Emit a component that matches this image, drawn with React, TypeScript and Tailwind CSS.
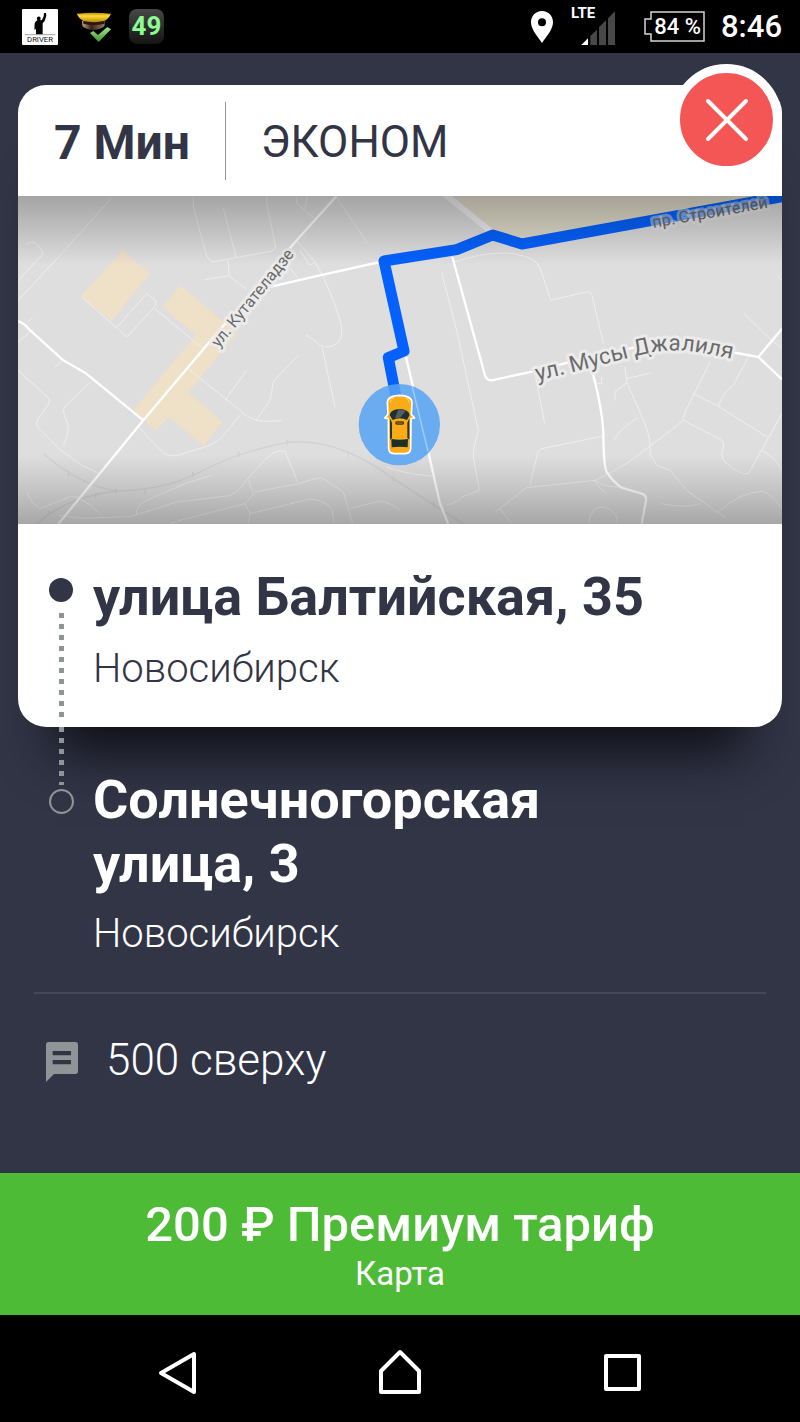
import { X } from "lucide-react";

const minorRoads = [
  "M54 330 L185 190 L335 22",
  "M54 272 L125 195 Q132 185 125 178 L105 157 Q95 150 78 165",
  "M54 540 L145 622 Q153 630 145 642 L112 690 Q106 702 115 712 L180 778 L245 825 L295 848",
  "M275 572 L195 648 Q188 656 192 672 L203 700 Q210 725 190 765",
  "M54 455 L98 418 M165 530 L190 508 M80 398 L97 382",
  "M245 320 L350 412 L380 440 L465 348 Q472 338 465 330 L440 310 L350 412",
  "M465 355 L605 472",
  "M570 540 L720 660 Q755 695 800 693 L845 691",
  "M740 540 L675 630",
  "M892 497 L825 568 Q816 578 817 592 L810 630 L768 690",
  "M720 675 L665 742 Q655 752 620 768 L530 796 Q500 800 480 778 L418 712",
  "M580 20 V50 L618 190 Q625 215 645 214 L815 182 Q828 178 826 165 L800 40 V20",
  "M670 55 L708 200",
  "M615 268 L688 256 L740 298 M688 256 L684 210",
  "M890 20 V40 L945 85 M915 55 L922 20",
  "M1010 22 L1102 158",
  "M890 150 L945 215 Q990 290 1022 395 Q1035 455 1000 466 Q970 478 945 452 L918 434",
  "M900 180 L925 220 Q935 228 945 212 M870 232 L895 265",
  "M966 470 L1005 650",
  "M80 905 Q95 940 120 955 L215 917 Q255 925 305 975",
  "M175 975 L250 984 L395 978 L530 935 L690 916 Q720 900 730 880 L800 803 Q830 775 855 783 Q862 800 893 875",
  "M410 975 Q405 945 440 930 L560 878 L635 855",
  "M510 998 L735 940 L765 905 L895 880 Q940 865 965 862 L1030 905 L1058 1000",
  "M748 870 Q748 890 760 905 M735 940 L750 970 L745 1000",
  "M750 970 L930 926 Q970 928 995 955 L1003 1000",
  "M1050 955 L1140 932 Q1180 940 1200 960",
  "M1325 247 L1370 420 L1435 720 Q1420 770 1420 800 L1438 900 L1385 920 Q1360 945 1340 942",
  "M1365 215 Q1440 188 1510 188 Q1580 190 1612 218 Q1625 240 1652 330 L1762 304 Q1772 302 1776 315 L1810 460",
  "M1605 550 L1634 700",
  "M1805 738 L1625 775 Q1612 780 1610 800 L1590 885",
  "M1485 965 L1580 892 L1785 870 Q1860 835 1900 805 L2045 695 L2060 655 L2130 515",
  "M1500 955 L1535 1000",
  "M1875 530 L1880 575 L1935 700 Q1955 755 1950 790 L1970 825 L2010 840 L2060 900 L2180 985",
  "M1880 565 L1955 547 M1880 577 L1845 605 V630 M1790 580 H1805 V560",
  "M1840 750 Q1870 705 1915 682",
  "M2048 688 L2165 750 Q2175 758 2170 770 Q2160 800 2175 815 Q2220 855 2245 850 L2346 670",
  "M2080 610 L2155 648 L2305 742 M2155 648 Q2170 605 2200 585 L2245 500",
  "M2285 780 Q2320 795 2346 838",
  "M2150 970 Q2215 905 2290 903 Q2320 915 2346 955",
  "M2232 370 L2310 445 L2346 475 M2332 255 L2346 270",
  "M1765 1000 Q1775 945 1810 950 Q1860 965 1850 1000",
  "M1785 870 Q1795 895 1820 908 M1785 870 Q1810 890 1860 890",
  "M1985 940 Q2060 955 2100 940",
  "M1160 830 Q1210 850 1295 857",
];

const mainRoads = [
  "M54 392 Q75 400 85 415 L190 510 L255 547 L430 690",
  "M800 292 L960 255 L1140 215",
  "M175 1001 L430 690 L620 465 L890 150 L1010 17",
  "M1357 200 L1455 555 Q1460 570 1475 570 L1600 543 L1750 505 L2000 450 L2210 488 L2275 500 L2346 415",
  "M2275 500 L2346 567",
  "M1770 520 Q1805 640 1810 725 Q1811 830 1820 845 Q1840 875 1865 892 L1925 910 Q1940 915 1938 930 L1925 1001",
  "M1218 500 L1285 785 L1320 940 L1345 1001",
];

function StatusBar() {
  return (
    <header className="flex h-[53px] items-center justify-between bg-black pr-[18px] pl-[22px] text-white">
      <div className="flex items-center gap-[18px]">
        <svg className="size-[36px]" viewBox="0 0 108 108">
          <rect width="108" height="108" rx="3" fill="#fff" />
          <path d="M66 12 L72 12 L73 20 L68 36 L62 43 L62 76 H42 V60 L37 62 L38 43 Q41 36 46 34 Q43 28 46 24 Q52 20 56 26 L55 34 L60 33 L65 22Z" fill="#050505" />
          <path d="M8 77 H100" stroke="#777" strokeWidth="2" />
          <text x="54" y="100" textAnchor="middle" fontSize="23" fill="#111" fontFamily="Roboto, sans-serif">DRIVER</text>
        </svg>
        <svg className="h-[32px] w-[35px]" viewBox="0 0 105 96">
          <defs>
            <linearGradient id="cap" x1="0" x2="0" y1="0" y2="1">
              <stop offset="0" stopColor="#b98a05" />
              <stop offset=".35" stopColor="#ffdc36" />
              <stop offset="1" stopColor="#b98909" />
            </linearGradient>
            <linearGradient id="visor" x1="0" x2="1">
              <stop offset="0" stopColor="#c6a58b" />
              <stop offset=".4" stopColor="#3a2415" />
              <stop offset="1" stopColor="#9c8070" />
            </linearGradient>
            <linearGradient id="tick" x1="0" x2="0" y1="0" y2="1">
              <stop offset="0" stopColor="#a6e887" />
              <stop offset="1" stopColor="#3f9135" />
            </linearGradient>
          </defs>
          <path d="M18 30 H88 L85 46 Q70 58 50 56 Q28 55 19 44Z" fill="url(#visor)" />
          <path d="M22 30 H86 V38 Q54 46 22 38Z" fill="#2a1809" />
          <path d="M2 8 Q54 2 105 8 Q98 24 84 30 Q54 37 22 30 Q8 22 2 8Z" fill="url(#cap)" />
          <path d="M42 66 L52 60 L66 72 L94 48 L105 55 L68 93Z" fill="url(#tick)" />
        </svg>
        <span className="flex size-[35px] items-center justify-center rounded-lg bg-linear-to-b from-[#484848] to-[#151515] text-[26px] leading-[35px] font-bold text-[#8dfa92]">
          49
        </span>
      </div>
      <div className="flex items-center">
        <svg className="h-[32px] w-[22px]" viewBox="0 0 66 96">
          <path fillRule="evenodd" fill="#fff" d="M33 0 C13 0 0 15 0 34 C0 57 24 82 33 96 C42 82 66 57 66 34 C66 15 53 0 33 0Z M33 22 a12 12 0 1 1 0 24 a12 12 0 1 1 0-24Z" />
        </svg>
        <div className="relative ml-[18px] h-[40px] w-[44px]">
          <span className="absolute -top-0.5 left-0 text-[15px] leading-4 font-bold">LTE</span>
          <svg className="absolute right-0 bottom-0.5 h-[34px] w-[34px]" viewBox="0 0 102 102">
            <path d="M28 75 L48 56 V102 H28Z M54 49 L75 28 V102 H54Z M81 22 L102 1 V102 H81Z" fill="#484848" />
            <path d="M1 102 L21 82 V102Z" fill="#fff" />
          </svg>
        </div>
        <div className="relative ml-[29px] flex h-[31px] w-[61px] items-center justify-end pr-1">
          <svg className="absolute inset-0" viewBox="0 0 61 31" fill="none" stroke="#d5d5d5" strokeWidth="1.5">
            <path d="M7 1 H60 V30 H7 V23 H1 V8 H7Z" />
          </svg>
          <span className="text-[22px] leading-6 font-medium whitespace-nowrap">84 %</span>
        </div>
        <time className="ml-4 text-[31px] leading-10 font-medium">8:46</time>
      </div>
    </header>
  );
}

function RouteMap() {
  return (
    <svg className="block h-[328px] w-full" viewBox="54 17 2292 984" preserveAspectRatio="xMidYMid slice" fill="none">
      <defs>
        <linearGradient id="shade" x1="0" x2="0" y1="0" y2="1">
          <stop offset="0" stopColor="#000" stopOpacity=".26" />
          <stop offset=".1" stopColor="#000" stopOpacity=".14" />
          <stop offset=".21" stopColor="#000" stopOpacity="0" />
          <stop offset=".79" stopColor="#000" stopOpacity="0" />
          <stop offset=".9" stopColor="#000" stopOpacity=".12" />
          <stop offset="1" stopColor="#000" stopOpacity=".25" />
        </linearGradient>
        <path id="musy" d="M1612 572 Q1760 535 1905 498 Q1985 475 2060 482 Q2130 490 2240 516" />
      </defs>
      <rect x="54" y="17" width="2292" height="984" fill="#dedede" />
      <path d="M1335 17 L1470 118 L1570 155 L2346 17Z" fill="#e0dccb" />
      <g fill="#efe0c8">
        <path d="M368 180 L450 250 L335 392 L242 318Z" />
        <path d="M542 285 L712 430 L565 606 L667 695 L610 767 L508 680 L468 722 L400 660 L587 434 L487 348Z" />
      </g>
      <g stroke="#d2d2d2" strokeWidth="4">
        <path d="M130 790 Q260 900 370 902 Q500 895 590 850 Q720 780 870 755 Q1020 745 1180 865 L1390 1001" />
        <path d="M110 1000 Q200 920 350 902 M205 843 V860 M347 893 V910 M435 892 V910 M578 845 V862 M716 783 V800 M862 748 V765 M1045 783 V800 M1180 858 V875 M1302 935 V952 M147 958 V975 M287 908 V925" />
      </g>
      <g stroke="#efefef" strokeWidth="3">
        {minorRoads.map((d) => (
          <path key={d} d={d} />
        ))}
      </g>
      <g stroke="#fff" strokeWidth="7" strokeLinejoin="round">
        {mainRoads.map((d) => (
          <path key={d} d={d} />
        ))}
      </g>
      <path d="M1335 12 L1475 125" stroke="#efefef" strokeWidth="18" />
      <path d="M1188 620 L1165 502 L1212 482 L1152 212 L1370 178 L1478 134 L1566 161 L2352 18" stroke="#0461fd" strokeWidth="33" strokeLinejoin="round" />
      <g fill="#6b6b6b" stroke="#ebebeb" strokeWidth="18" strokeLinejoin="round" paintOrder="stroke" fontFamily="Roboto, sans-serif">
        <text fontSize="49" transform="translate(656 474) rotate(-51)">ул. Кутателадзе</text>
        <text fontSize="68">
          <textPath href="#musy">ул. Мусы Джалиля</textPath>
        </text>
        <text fontSize="49" strokeOpacity=".5" transform="translate(1960 113) rotate(-10)">пр. Строителей</text>
      </g>
      <rect x="54" y="17" width="2292" height="984" fill="url(#shade)" />
      <g transform="translate(1020 540)">
        <circle cx="178" cy="163" r="122" fill="#56a3f3" fillOpacity=".85" />
        <path d="M216 47 L264 243" stroke="#9fcbfa" strokeWidth="4" />
        <path d="M142 95 Q144 76 179 75 Q214 76 216 95 L214 132 L224 143 L213 145 L212 235 Q211 249 196 250 H162 Q147 249 146 235 L145 145 L134 143 L144 132Z" fill="#f9ac17" stroke="#fff" strokeWidth="5" strokeLinejoin="round" />
        <path d="M149 134 Q152 117 179 116 Q206 117 209 134 L201 149 Q179 139 158 149Z" fill="#1e302f" />
        <path d="M175 117 L198 121 L180 142 L165 144Z" fill="#51605f" />
        <path d="M150 144 L156 157 V203 L150 208Z M208 144 L202 157 V203 L208 208Z" fill="#2c3527" />
        <path d="M154 206 Q179 211 204 206 L203 231 Q179 227 155 231Z" fill="#1b3029" />
        <rect x="166" y="153" width="26" height="10" rx="4" fill="#50350a" />
        <path d="M170 158 H188" stroke="#e7a020" strokeWidth="2" />
        <path d="M150 98 Q152 84 163 82 M208 98 Q206 84 195 82" stroke="#ffd15d" strokeWidth="3" />
      </g>
    </svg>
  );
}

function Dots({ className = "" }: { className?: string }) {
  return <div className={`w-[5px] bg-[repeating-linear-gradient(to_bottom,#8f9597_0_5px,transparent_5px_11px)] ${className}`} />;
}

export default function App() {
  return (
    <div className="flex min-h-screen flex-col bg-[#323546] font-['Roboto',sans-serif]">
      <StatusBar />

      <main className="flex-1 px-[18px] pt-8">
        <section className="relative rounded-[28px] bg-white text-[#323546] shadow-[0_62px_50px_-38px_#0e0e16]">
          <div className="flex h-[111px] items-center pl-9">
            <h1 className="pt-1 text-[48px] leading-[56px] font-bold">7 Мин</h1>
            <div className="mx-[35px] h-[78px] w-px bg-[#8f9597]" />
            <span className="pt-0.5 text-[44px] leading-[56px]">ЭКОНОМ</span>
          </div>
          <button
            aria-label="Закрыть"
            className="absolute -top-[21px] right-0 flex size-[111px] items-center justify-center rounded-full border-[9px] border-white bg-[#f45656] text-white"
          >
            <X className="size-[76px]" strokeWidth={1.25} />
          </button>

          <RouteMap />

          <div className="flex gap-5 pl-[31px]">
            <div className="flex w-[24px] flex-col items-center pt-[54px]">
              <div className="size-[24px] rounded-full bg-[#323546]" />
              <Dots className="mt-[11px] mb-2 flex-1" />
            </div>
            <div className="pt-[41px] pb-[34px]">
              <h2 className="text-[54px] leading-[64px] font-bold">улица Балтийская, 35</h2>
              <p className="mt-4 text-[40px] leading-[48px] font-light">Новосибирск</p>
            </div>
          </div>
        </section>

        <section className="relative flex gap-5 pl-[31px] text-white">
          <div className="flex w-[24px] flex-col items-center">
            <Dots className="h-[58px]" />
            <div className="mt-1 size-[25px] rounded-full border-2 border-[#8f9597]" />
          </div>
          <div className="max-w-[480px] pt-[41px]">
            <h2 className="text-[54px] leading-[64px] font-bold">Солнечногорская улица, 3</h2>
            <p className="mt-3.5 text-[40px] leading-[48px] font-light">Новосибирск</p>
          </div>
        </section>

        <hr className="mx-4 mt-[34px] border-t-2 border-[#454858]" />

        <div className="flex items-center gap-7 px-7 pt-[38px] text-white">
          <svg className="mt-1 h-[40px] w-[32px]" viewBox="0 0 96 120">
            <path fillRule="evenodd" fill="#8f9596" d="M8 0 H88 Q96 0 96 8 V88 Q96 96 88 96 H24 L0 120 V8 Q0 0 8 0Z M20 27 V40 H75 V27Z M20 54 V67 H75 V54Z" />
          </svg>
          <p className="text-[44px] leading-[56px] font-light">500 сверху</p>
        </div>
      </main>

      <button className="flex h-[142px] w-full flex-col items-center bg-[#4dbb35] pt-[23px] text-white">
        <span className="text-[49px] leading-[58px] font-medium">200 ₽ Премиум тариф</span>
        <span className="text-[33px] leading-10">Карта</span>
      </button>

      <nav className="flex h-[107px] items-center bg-black pt-2 text-white">
        <button aria-label="Назад" className="flex flex-4 justify-center">
          <svg className="size-[44px]" viewBox="0 0 44 44" fill="none" stroke="currentColor" strokeWidth="4" strokeLinejoin="round">
            <path d="M5 22 L38 3 V41Z" />
          </svg>
        </button>
        <button aria-label="Домой" className="flex flex-1 justify-center">
          <svg className="h-[48px] w-[46px]" viewBox="0 0 46 48" fill="none" stroke="currentColor" strokeWidth="4" strokeLinejoin="round">
            <path d="M23 3 L42 22 V43 H4 V22Z" />
          </svg>
        </button>
        <button aria-label="Недавние" className="flex flex-4 justify-center">
          <svg className="h-[37px] w-[37px]" viewBox="0 0 37 37" fill="none" stroke="currentColor" strokeWidth="4" strokeLinejoin="round">
            <path d="M2 2 H35 V35 H2Z" />
          </svg>
        </button>
      </nav>
    </div>
  );
}
